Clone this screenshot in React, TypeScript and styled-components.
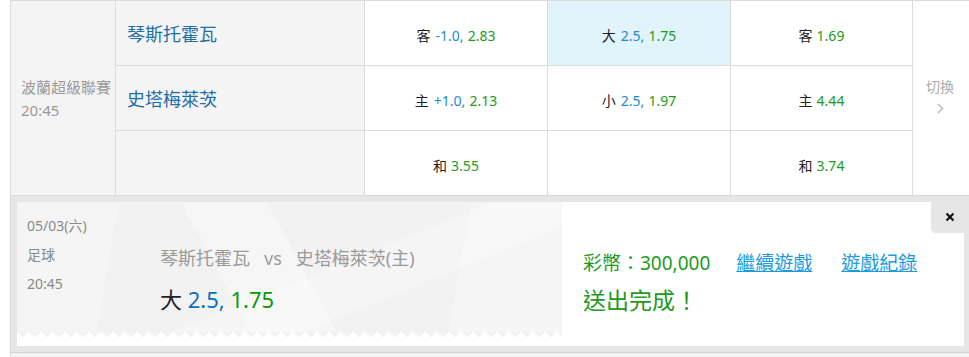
import styled, { createGlobalStyle } from 'styled-components';

const GlobalStyle = createGlobalStyle`
  html, body {
    margin: 0;
    padding: 0;
    background: #fff;
    overflow: hidden;
  }
  body {
    font-family: 'Noto Sans', 'Noto Sans CJK TC', sans-serif;
  }
`;

const line = '#dcdcdc';

type Odd = { label: string; line?: string; price: string };

const rows: { team: string; handicap?: Odd; total?: Odd; win: Odd; active?: boolean }[] = [
  {
    team: '琴斯托霍瓦',
    handicap: { label: '客', line: '-1.0', price: '2.83' },
    total: { label: '大', line: '2.5', price: '1.75' },
    win: { label: '客', price: '1.69' },
    active: true,
  },
  {
    team: '史塔梅萊茨',
    handicap: { label: '主', line: '+1.0', price: '2.13' },
    total: { label: '小', line: '2.5', price: '1.97' },
    win: { label: '主', price: '4.44' },
  },
  {
    team: '',
    handicap: { label: '和', price: '3.55' },
    win: { label: '和', price: '3.74' },
  },
];

const App = () => {
  return (
    <>
      <GlobalStyle />
      <Page>
        <OddsGrid>
          <LeagueCell>
            <span>波蘭超級聯賽</span>
            <span>20:45</span>
          </LeagueCell>
          {rows.map((r, i) => (
            <RowCells key={i} odds={r} index={i} />
          ))}
        </OddsGrid>

        <ResultRow>
          <Panel>
            <Ticket>
              <TicketMeta>
                <span>05/03(六)</span>
                <span>足球</span>
                <span>20:45</span>
              </TicketMeta>
              <TicketBet>
                <Matchup>琴斯托霍瓦&nbsp;&nbsp; vs &nbsp;&nbsp;史塔梅萊茨(主)</Matchup>
                <Pick>
                  大 <Line>2.5,</Line> <Price>1.75</Price>
                </Pick>
              </TicketBet>
            </Ticket>
            <Result>
              <Balance>
                彩幣：300,000
                <ResultLink href='#'>繼續遊戲</ResultLink>
                <ResultLink href='#'>遊戲紀錄</ResultLink>
              </Balance>
              <Done>送出完成！</Done>
            </Result>
            <CloseButton aria-label='close'>
              <svg width='10' height='10' viewBox='0 0 10 10'>
                <path d='M1.5 1.5 L8.5 8.5 M8.5 1.5 L1.5 8.5' stroke='#111' strokeWidth='2.2' />
              </svg>
            </CloseButton>
          </Panel>
        </ResultRow>
        <NextRow />
      </Page>
    </>
  );
};

const OddText = ({ odd }: { odd?: Odd }) => {
  if (!odd) return null;
  return (
    <>
      <Label>{odd.label}</Label>
      {odd.line && <Line>{odd.line},</Line>}
      <Price>{odd.price}</Price>
    </>
  );
};

const RowCells = ({ odds, index }: { odds: (typeof rows)[number]; index: number }) => (
  <>
    <TeamCell>{odds.team}</TeamCell>
    <OddCell>
      <OddText odd={odds.handicap} />
    </OddCell>
    <OddCell $active={odds.active}>
      <OddText odd={odds.total} />
    </OddCell>
    <OddCell>
      <OddText odd={odds.win} />
    </OddCell>
    {index === 0 && (
      <SwitchCell>
        <span>切換</span>
        <svg width='7' height='11' viewBox='0 0 7 11'>
          <path d='M1 1 L5.5 5.5 L1 10' fill='none' stroke='#b5b5b5' strokeWidth='1.3' />
        </svg>
      </SwitchCell>
    )}
  </>
);

const Page = styled.div`
  width: 962px;
  margin-left: 10px;
`;

const OddsGrid = styled.div`
  display: grid;
  grid-template-columns: 104px 248px 182px 182px 181px 1fr;
  grid-template-rows: repeat(3, 64px);
  gap: 1px;
  background: ${line};
  border: 1px solid ${line};
`;

const LeagueCell = styled.div`
  grid-row: span 3;
  background: #f4f4f4;
  display: flex;
  flex-direction: column;
  justify-content: center;
  padding: 2px 0 0 10px;
  font-size: 15px;
  line-height: 23px;
  color: #9a9a9a;
`;

const TeamCell = styled.div`
  background: #f4f4f4;
  display: flex;
  align-items: center;
  padding-left: 11px;
  font-size: 18px;
  color: #1f6ea6;
`;

const OddCell = styled.div<{ $active?: boolean }>`
  background: ${(p) => (p.$active ? '#e1f4fc' : '#fff')};
  display: flex;
  align-items: center;
  justify-content: center;
  gap: 5px;
  padding-top: 4px;
  font-size: 14px;
`;

const Label = styled.span`
  color: #222;
`;

const Line = styled.span`
  color: #1f8ad6;
`;

const Price = styled.span`
  color: #1e9a1e;
  margin-left: -1px;
`;

const SwitchCell = styled.div`
  grid-row: span 3;
  background: #fff;
  display: flex;
  flex-direction: column;
  align-items: center;
  justify-content: center;
  gap: 7px;
  padding: 0 4px 6px 0;
  font-size: 14px;
  color: #aaa;
`;

const ResultRow = styled.div`
  background: #e6e6e6;
  border-left: 1px solid ${line};
  border-right: 1px solid ${line};
  border-bottom: 1px solid #d2d2d2;
  padding: 6px 7px 6px 6px;
`;

const Panel = styled.div`
  position: relative;
  display: flex;
  height: 144px;
  background: #fff;
`;

const Ticket = styled.div`
  position: relative;
  display: flex;
  width: 545px;
  height: 130px;
  background:
    linear-gradient(62deg, transparent 0 38%, rgba(255, 255, 255, 0.3) 38% 52%, transparent 52%),
    linear-gradient(158deg, transparent 0 55%, rgba(255, 255, 255, 0.25) 55% 70%, transparent 70%),
    linear-gradient(100deg, rgba(255, 255, 255, 0.2) 0 18%, transparent 18% 80%, rgba(255, 255, 255, 0.25) 80%),
    #f2f2f2;

  &::after {
    content: '';
    position: absolute;
    top: 100%;
    left: 0;
    right: 0;
    height: 5px;
    background: conic-gradient(from -50deg at 50% 100%, #f2f2f2 100deg, transparent 0) 0 0 / 12px 100%;
  }
`;

const TicketMeta = styled.div`
  display: flex;
  flex-direction: column;
  width: 133px;
  padding: 9px 0 0 10px;
  font-size: 14px;
  line-height: 29px;
  color: #8a8a8a;
`;

const TicketBet = styled.div`
  display: flex;
  flex-direction: column;
  padding-top: 43px;
`;

const Matchup = styled.div`
  font-size: 18px;
  line-height: 26px;
  color: #9a9a9a;
`;

const Pick = styled.div`
  margin-top: 13px;
  font-size: 22px;
  line-height: 30px;
  color: #222;

  ${Line} {
    color: #0a70c0;
  }
  ${Price} {
    color: #0a990a;
    margin-left: 0;
  }
`;

const Result = styled.div`
  display: flex;
  flex-direction: column;
  padding: 47px 0 0 21px;
  color: #1e9a1e;
`;

const Balance = styled.div`
  display: flex;
  align-items: baseline;
  font-size: 19px;
  line-height: 28px;
`;

const ResultLink = styled.a`
  margin-left: 26px;
  color: #1a9be0;
  font-size: 19px;
  text-decoration: underline;

  & + & {
    margin-left: 29px;
  }
`;

const Done = styled.div`
  margin-top: 7px;
  font-size: 23px;
  line-height: 32px;
`;

const CloseButton = styled.button`
  position: absolute;
  top: 0;
  right: 0;
  width: 33px;
  height: 31px;
  padding: 0 0 2px 4px;
  border: none;
  background: #e6e6e6;
  border-bottom-left-radius: 5px;
  display: flex;
  align-items: center;
  justify-content: center;
  cursor: pointer;
`;

const NextRow = styled.div`
  height: 8px;
  background: #f4f4f4;
  border-left: 1px solid ${line};
`;

export default App;
